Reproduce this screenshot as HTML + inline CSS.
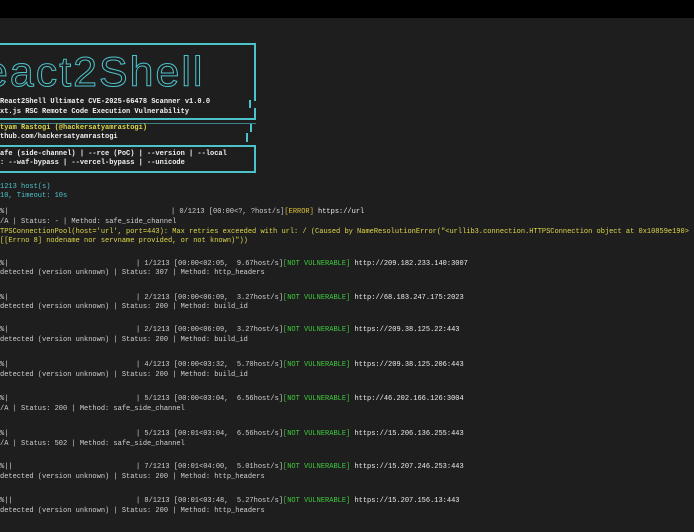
<!DOCTYPE html>
<html><head><meta charset="utf-8"><style>
html,body{margin:0;padding:0;width:694px;height:532px;overflow:hidden;background:#1e1e1e}
.top{position:absolute;left:0;top:0;width:694px;height:18px;background:#000}
.l{position:absolute;white-space:pre;font-family:"Liberation Mono",monospace;font-size:7px;line-height:10px;color:#d0d0d0}
.c{color:#4cc3cb}.y{color:#e0d84a}.w{color:#f0f0f0;font-weight:bold}.g{color:#3ecb3e}.o{color:#e0c23a}.u{color:#ececec}
.b{position:absolute;background:#4cc3cb}
.art{position:absolute;left:-16px;top:50px;font-family:"Liberation Sans",sans-serif;font-size:42px;letter-spacing:2px;color:transparent;-webkit-text-stroke:1px #4cc3cb;transform:scaleX(1.02);transform-origin:left top;line-height:44px}
</style></head><body>
<div class="top"></div>
<div class="b" style="left:0;top:43px;width:256px;height:2px"></div>
<div class="b" style="left:254px;top:43px;width:2px;height:58px"></div>
<div class="b" style="left:249px;top:100px;width:2px;height:8px"></div>
<div class="b" style="left:254px;top:108px;width:2px;height:10px"></div>
<div class="b" style="left:0;top:118px;width:256px;height:2px"></div>
<div class="b" style="left:0;top:123px;width:256px;height:1px;opacity:.6"></div>
<div class="b" style="left:250px;top:124px;width:2px;height:8px"></div>
<div class="b" style="left:246px;top:133px;width:2px;height:9px"></div>
<div class="b" style="left:0;top:145px;width:256px;height:2px"></div>
<div class="b" style="left:254px;top:145px;width:2px;height:28px"></div>
<div class="b" style="left:0;top:171px;width:256px;height:2px"></div>
<div class="art">eact2Shell</div>
<div class="l w" style="left:0;top:97px">React2Shell Ultimate CVE-2025-66478 Scanner v1.0.0</div>
<div class="l w" style="left:0;top:107px">xt.js RSC Remote Code Execution Vulnerability</div>
<div class="l y" style="left:0;top:123px;font-weight:bold">tyam Rastogi (@hackersatyamrastogi)</div>
<div class="l w" style="left:0;top:132px">thub.com/hackersatyamrastogi</div>
<div class="l w" style="left:0;top:149px">afe (side-channel) | --rce (PoC) | --version | --local</div>
<div class="l w" style="left:0;top:158px">: --waf-bypass | --vercel-bypass | --unicode</div>
<div class="l c" style="left:0;top:182px">1213 host(s)</div>
<div class="l c" style="left:0;top:191px">10, Timeout: 10s</div>

<div class="l" style="left:0;top:207px">%|</div>
<div class="l" style="left:171px;top:207px">| 0/1213 [00:00&lt;?, ?host/s]<span class="o">[ERROR]</span> <span class="u">https://url</span></div>
<div class="l" style="left:0;top:217px">/A | Status: - | Method: safe_side_channel</div>
<div class="l y" style="left:0;top:227px">TPSConnectionPool(host='url', port=443): Max retries exceeded with url: / (Caused by NameResolutionError("&lt;urllib3.connection.HTTPSConnection object at 0x10859e190&gt;</div>
<div class="l y" style="left:0;top:236px">[[Errno 8] nodename nor servname provided, or not known)"))</div>

<div class="l" style="left:0;top:259px">%|</div>
<div class="l" style="left:136px;top:259px">| 1/1213 [00:00&lt;02:05,  9.67host/s]<span class="g">[NOT VULNERABLE]</span> <span class="u">http://209.182.233.140:3007</span></div>
<div class="l" style="left:0;top:268px">detected (version unknown) | Status: 307 | Method: http_headers</div>

<div class="l" style="left:0;top:293px">%|</div>
<div class="l" style="left:136px;top:293px">| 2/1213 [00:00&lt;06:09,  3.27host/s]<span class="g">[NOT VULNERABLE]</span> <span class="u">http://68.183.247.175:2023</span></div>
<div class="l" style="left:0;top:302px">detected (version unknown) | Status: 200 | Method: build_id</div>

<div class="l" style="left:0;top:325px">%|</div>
<div class="l" style="left:136px;top:325px">| 2/1213 [00:00&lt;06:09,  3.27host/s]<span class="g">[NOT VULNERABLE]</span> <span class="u">https://209.38.125.22:443</span></div>
<div class="l" style="left:0;top:335px">detected (version unknown) | Status: 200 | Method: build_id</div>

<div class="l" style="left:0;top:360px">%|</div>
<div class="l" style="left:136px;top:360px">| 4/1213 [00:00&lt;03:32,  5.70host/s]<span class="g">[NOT VULNERABLE]</span> <span class="u">https://209.38.125.206:443</span></div>
<div class="l" style="left:0;top:370px">detected (version unknown) | Status: 200 | Method: build_id</div>

<div class="l" style="left:0;top:394px">%|</div>
<div class="l" style="left:136px;top:394px">| 5/1213 [00:00&lt;03:04,  6.56host/s]<span class="g">[NOT VULNERABLE]</span> <span class="u">http://46.202.166.126:3004</span></div>
<div class="l" style="left:0;top:404px">/A | Status: 200 | Method: safe_side_channel</div>

<div class="l" style="left:0;top:429px">%|</div>
<div class="l" style="left:136px;top:429px">| 5/1213 [00:01&lt;03:04,  6.56host/s]<span class="g">[NOT VULNERABLE]</span> <span class="u">https://15.206.136.255:443</span></div>
<div class="l" style="left:0;top:439px">/A | Status: 502 | Method: safe_side_channel</div>

<div class="l" style="left:0;top:462px">%||</div>
<div class="l" style="left:136px;top:462px">| 7/1213 [00:01&lt;04:00,  5.01host/s]<span class="g">[NOT VULNERABLE]</span> <span class="u">https://15.207.246.253:443</span></div>
<div class="l" style="left:0;top:472px">detected (version unknown) | Status: 200 | Method: http_headers</div>

<div class="l" style="left:0;top:496px">%||</div>
<div class="l" style="left:136px;top:496px">| 8/1213 [00:01&lt;03:48,  5.27host/s]<span class="g">[NOT VULNERABLE]</span> <span class="u">https://15.207.156.13:443</span></div>
<div class="l" style="left:0;top:506px">detected (version unknown) | Status: 200 | Method: http_headers</div>
</body></html>
